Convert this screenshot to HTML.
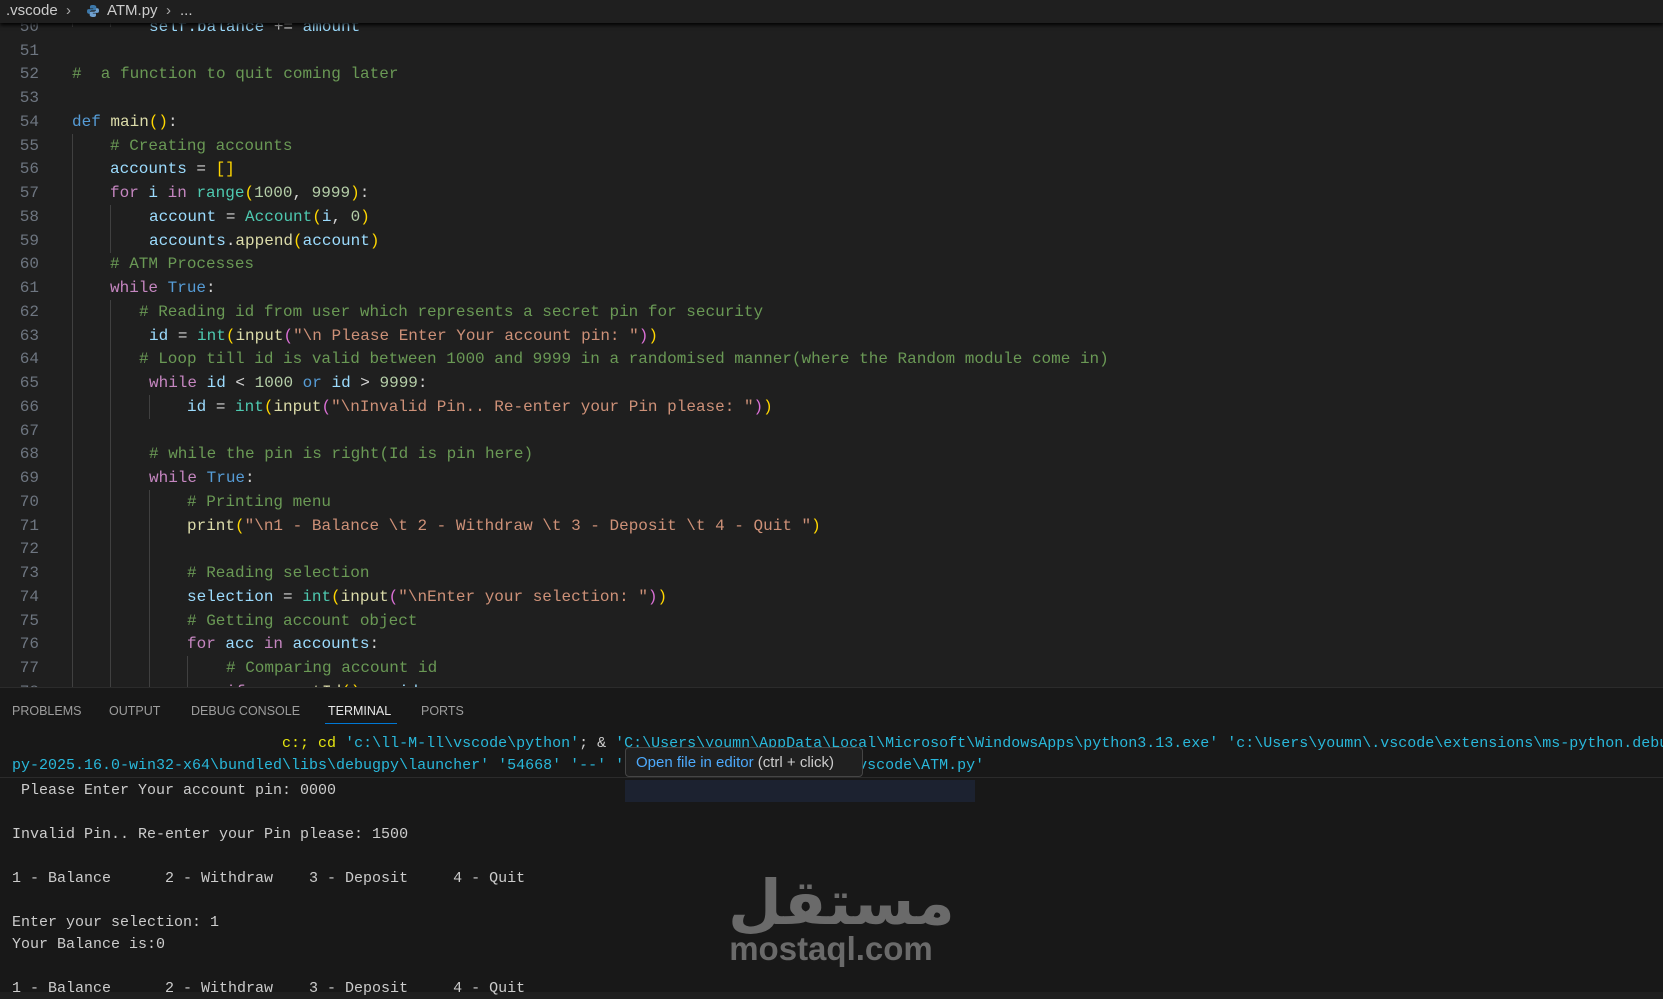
<!DOCTYPE html>
<html><head><meta charset="utf-8"><style>
body{margin:0;width:1663px;height:991px;overflow:hidden;background:#1f1f1f;font-family:"Liberation Mono",monospace;position:relative}
.bc{position:absolute;left:0;top:0;width:1663px;height:23px;background:#1f1f1f;box-shadow:0 2px 4px #000;z-index:3;color:#cccccc;font:15px "Liberation Sans",sans-serif;line-height:21px}
.ed{position:absolute;left:0;top:0;width:1663px;height:687px;overflow:hidden}
.l{position:absolute;left:0;height:24px;line-height:24px;font-size:16px;white-space:pre;color:#cccccc}
.n{position:absolute;left:0;width:39px;text-align:right;color:#6e7681}
.c{position:absolute;left:72px;color:#9cdcfe}
.g{position:absolute;width:1px;background:#404040}
.k{color:#569cd6}.p{color:#c586c0}.f{color:#dcdcaa}.t{color:#4ec9b0}.nu{color:#b5cea8}.s{color:#ce9178}.cm{color:#6a9955}.w{color:#d4d4d4}
.b1{color:#ffd700}.b2{color:#da70d6}.b3{color:#179fff}
.pn{position:absolute;left:0;top:687px;width:1663px;height:304px;background:#181818;border-top:1px solid #2b2b2b}
.tab{position:absolute;top:16px;font:12.5px "Liberation Sans",sans-serif;color:#9d9d9d}
.tl{position:absolute;font-size:15px;white-space:pre;color:#cccccc;line-height:20px}
.cy{color:#29b8db}
</style></head><body>
<div class="bc"><span style="position:absolute;left:6px">.vscode</span><span style="position:absolute;left:66px;color:#aaa">&#8250;</span>
<svg style="position:absolute;left:86px;top:4px" width="14" height="14" viewBox="0 0 14 14"><path d="M7 1C4 1 4 2 4 3v1.5h3.2v.6H2.6C1.4 5.1 1 6 1 7.4s.5 2.3 1.6 2.3H4V8.2c0-1 .8-1.8 1.8-1.8h3c.9 0 1.5-.6 1.5-1.5V3C10.3 1.8 9 1 7 1z" fill="#3c78aa"/><path d="M7 13c3 0 3-1 3-2V9.5H6.8v-.6h4.6c1.2 0 1.6-.9 1.6-2.3s-.5-2.3-1.6-2.3H10v1.5c0 1-.8 1.8-1.8 1.8h-3c-.9 0-1.5.6-1.5 1.5V11C3.7 12.2 5 13 7 13z" fill="#6fa0d0"/></svg>
<span style="position:absolute;left:107px">ATM.py</span><span style="position:absolute;left:166px;color:#aaa">&#8250;</span><span style="position:absolute;left:180px">...</span></div>
<div class="ed">
<div class="g" style="left:72px;top:15px;height:12px"></div><div class="g" style="left:110px;top:15px;height:12px"></div>
<div class="g" style="left:72px;top:134px;height:560px"></div>
<div class="g" style="left:110px;top:205px;height:48px"></div>
<div class="g" style="left:110px;top:300px;height:400px"></div>
<div class="g" style="left:149px;top:395px;height:24px"></div>
<div class="g" style="left:149px;top:490px;height:200px"></div>
<div class="g" style="left:187px;top:656px;height:40px"></div>
<div class="l" style="top:15px"><span class="n">50</span><span class="c" style="left:149px">self.balance <span class="w">+=</span> amount</span></div>
<div class="l" style="top:39px"><span class="n">51</span></div>
<div class="l" style="top:62px"><span class="n">52</span><span class="c cm">#  a function to quit coming later</span></div>
<div class="l" style="top:86px"><span class="n">53</span></div>
<div class="l" style="top:110px"><span class="n">54</span><span class="c"><span class="k">def</span> <span class="f">main</span><span class="b1">()</span><span class="w">:</span></span></div>
<div class="l" style="top:134px"><span class="n">55</span><span class="c cm" style="left:110px"># Creating accounts</span></div>
<div class="l" style="top:157px"><span class="n">56</span><span class="c" style="left:110px">accounts <span class="w">=</span> <span class="b1">[]</span></span></div>
<div class="l" style="top:181px"><span class="n">57</span><span class="c" style="left:110px"><span class="p">for</span> i <span class="p">in</span> <span class="t">range</span><span class="b1">(</span><span class="nu">1000</span><span class="w">, </span><span class="nu">9999</span><span class="b1">)</span><span class="w">:</span></span></div>
<div class="l" style="top:205px"><span class="n">58</span><span class="c" style="left:149px">account <span class="w">=</span> <span class="t">Account</span><span class="b1">(</span>i<span class="w">, </span><span class="nu">0</span><span class="b1">)</span></span></div>
<div class="l" style="top:229px"><span class="n">59</span><span class="c" style="left:149px">accounts<span class="w">.</span><span class="f">append</span><span class="b1">(</span>account<span class="b1">)</span></span></div>
<div class="l" style="top:252px"><span class="n">60</span><span class="c cm" style="left:110px"># ATM Processes</span></div>
<div class="l" style="top:276px"><span class="n">61</span><span class="c" style="left:110px"><span class="p">while</span> <span class="k">True</span><span class="w">:</span></span></div>
<div class="l" style="top:300px"><span class="n">62</span><span class="c cm" style="left:139px"># Reading id from user which represents a secret pin for security</span></div>
<div class="l" style="top:324px"><span class="n">63</span><span class="c" style="left:149px">id <span class="w">=</span> <span class="t">int</span><span class="b1">(</span><span class="f">input</span><span class="b2">(</span><span class="s">"\n Please Enter Your account pin: "</span><span class="b2">)</span><span class="b1">)</span></span></div>
<div class="l" style="top:347px"><span class="n">64</span><span class="c cm" style="left:139px"># Loop till id is valid between 1000 and 9999 in a randomised manner(where the Random module come in)</span></div>
<div class="l" style="top:371px"><span class="n">65</span><span class="c" style="left:149px"><span class="p">while</span> id <span class="w">&lt;</span> <span class="nu">1000</span> <span class="k">or</span> id <span class="w">&gt;</span> <span class="nu">9999</span><span class="w">:</span></span></div>
<div class="l" style="top:395px"><span class="n">66</span><span class="c" style="left:187px">id <span class="w">=</span> <span class="t">int</span><span class="b1">(</span><span class="f">input</span><span class="b2">(</span><span class="s">"\nInvalid Pin.. Re-enter your Pin please: "</span><span class="b2">)</span><span class="b1">)</span></span></div>
<div class="l" style="top:419px"><span class="n">67</span></div>
<div class="l" style="top:442px"><span class="n">68</span><span class="c cm" style="left:149px"># while the pin is right(Id is pin here)</span></div>
<div class="l" style="top:466px"><span class="n">69</span><span class="c" style="left:149px"><span class="p">while</span> <span class="k">True</span><span class="w">:</span></span></div>
<div class="l" style="top:490px"><span class="n">70</span><span class="c cm" style="left:187px"># Printing menu</span></div>
<div class="l" style="top:514px"><span class="n">71</span><span class="c" style="left:187px"><span class="f">print</span><span class="b1">(</span><span class="s">"\n1 - Balance \t 2 - Withdraw \t 3 - Deposit \t 4 - Quit "</span><span class="b1">)</span></span></div>
<div class="l" style="top:537px"><span class="n">72</span></div>
<div class="l" style="top:561px"><span class="n">73</span><span class="c cm" style="left:187px"># Reading selection</span></div>
<div class="l" style="top:585px"><span class="n">74</span><span class="c" style="left:187px">selection <span class="w">=</span> <span class="t">int</span><span class="b1">(</span><span class="f">input</span><span class="b2">(</span><span class="s">"\nEnter your selection: "</span><span class="b2">)</span><span class="b1">)</span></span></div>
<div class="l" style="top:609px"><span class="n">75</span><span class="c cm" style="left:187px"># Getting account object</span></div>
<div class="l" style="top:632px"><span class="n">76</span><span class="c" style="left:187px"><span class="p">for</span> acc <span class="p">in</span> accounts<span class="w">:</span></span></div>
<div class="l" style="top:656px"><span class="n">77</span><span class="c cm" style="left:226px"># Comparing account id</span></div>
<div class="l" style="top:680px"><span class="n">78</span><span class="c" style="left:226px"><span class="p">if</span> acc<span class="w">.</span><span class="f">getId</span><span class="b1">()</span> <span class="w">==</span> id<span class="w">:</span></span></div>
</div>
<div class="pn">
<span class="tab" style="left:12px">PROBLEMS</span><span class="tab" style="left:109px">OUTPUT</span><span class="tab" style="left:191px">DEBUG CONSOLE</span><span class="tab" style="left:328px;color:#e7e7e7">TERMINAL</span><span class="tab" style="left:421px">PORTS</span>
<div style="position:absolute;left:325px;top:35px;width:72px;height:1px;background:#0078d4"></div>
<div style="position:absolute;left:0;top:89px;width:1663px;height:1px;background:#2b2b2b"></div>
<div style="position:absolute;left:625px;top:92px;width:350px;height:22px;background:#1c2230"></div>
<div class="tl" style="left:282px;top:46px"><span style="color:#e5e510">c:;</span> <span style="color:#e5e510">cd</span> <span class="cy">'c:\ll-M-ll\vscode\python'</span>; &amp; <span class="cy">'C:\Users\youmn\AppData\Local\Microsoft\WindowsApps\python3.13.exe' 'c:\Users\youmn\.vscode\extensions\ms-python.debugpy</span></div>
<div class="tl cy" style="left:12px;top:68px">py-2025.16.0-win32-x64\bundled\libs\debugpy\launcher' '54668' '--' 'c:\ll-M-ll\vscode\python\.vscode\ATM.py'</div>
<div style="position:absolute;left:625px;top:59px;width:238px;height:30px;background:#202020;border:1px solid #454545;border-radius:4px;font:15px 'Liberation Sans',sans-serif;line-height:30px;color:#cccccc;box-sizing:border-box;padding-left:10px;white-space:nowrap"><span style="color:#4daafc">Open file in editor</span> (ctrl + click)</div>
<div class="tl" style="left:12px;top:93px"> Please Enter Your account pin: 0000</div>
<div class="tl" style="left:12px;top:137px">Invalid Pin.. Re-enter your Pin please: 1500</div>
<div class="tl" style="left:12px;top:181px">1 - Balance      2 - Withdraw    3 - Deposit     4 - Quit</div>
<div class="tl" style="left:12px;top:225px">Enter your selection: 1</div>
<div class="tl" style="left:12px;top:247px">Your Balance is:0</div>
<div class="tl" style="left:12px;top:291px">1 - Balance      2 - Withdraw    3 - Deposit     4 - Quit</div>
<div style="position:absolute;left:728px;top:180px;width:206px;text-align:center;font:bold 62px 'DejaVu Sans',sans-serif;color:#6a6a6a;line-height:70px">مستقل</div>
<div style="position:absolute;left:728px;top:243px;width:206px;text-align:center;font:bold 33px 'Liberation Sans',sans-serif;color:#6a6a6a;line-height:36px">mostaql.com</div>
</div>
</body></html>
